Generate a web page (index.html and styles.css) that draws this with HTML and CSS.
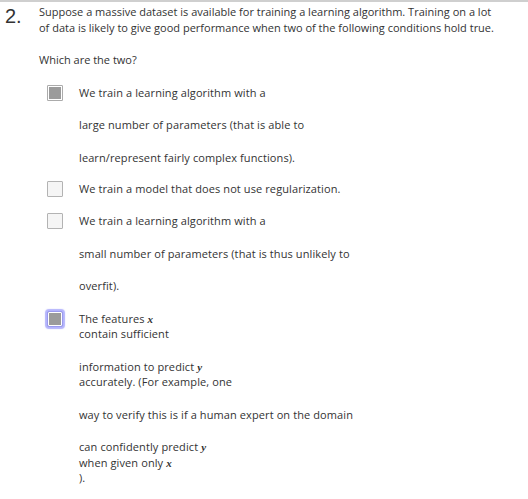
FILE: index.html
```html
<!DOCTYPE html>
<html>
<head>
<meta charset="utf-8">
<link rel="stylesheet" href="styles.css">
</head>
<body>
<div class="question">
  <div class="qnum">2.</div>
  <div class="qbody">
    <p class="nowrap">Suppose a massive dataset is available for training a learning algorithm. Training on a lot<br>of data is likely to give good performance when two of the following conditions hold true.</p>
    <p>Which are the two?</p>
    <div class="options">
      <div class="option">
        <span class="box checked"></span>
        <div class="otext">
          <p>We train a learning algorithm with a</p>
          <p>large number of parameters (that is able to</p>
          <p>learn/represent fairly complex functions).</p>
        </div>
      </div>
      <div class="option">
        <span class="box"></span>
        <div class="otext">
          <p>We train a model that does not use regularization.</p>
        </div>
      </div>
      <div class="option">
        <span class="box"></span>
        <div class="otext">
          <p>We train a learning algorithm with a</p>
          <p>small number of parameters (that is thus unlikely to</p>
          <p>overfit).</p>
        </div>
      </div>
      <div class="option last">
        <span class="box checked focused"></span>
        <div class="otext">
          <p>The features <span class="m">x</span><br>contain sufficient</p>
          <p>information to predict <span class="m">y</span><br>accurately. (For example, one</p>
          <p>way to verify this is if a human expert on the domain</p>
          <p>can confidently predict <span class="m">y</span><br>when given only <span class="m">x</span><br>).</p>
        </div>
      </div>
    </div>
  </div>
</div>
</body>
</html>
```
FILE: styles.css
```css
html, body {
  margin: 0;
  padding: 0;
  background: #fff;
}

.question {
  display: flex;
  align-items: flex-start;
  border-top: 2px solid #cfcfcf;
  padding: 2px 0 0 5px;
  color: #333;
}

.qnum {
  width: 34px;
  flex: none;
  font-family: "Liberation Sans", Arial, sans-serif;
  font-size: 20px;
  line-height: 23px;
  margin-top: 1px;
  color: #333;
}

.qbody {
  flex: 1;
  display: flex;
  flex-direction: column;
  gap: 17px;
  font-family: "Open Sans", "Noto Sans", sans-serif;
  font-size: 11px;
  line-height: 15.5px;
  color: #333;
}

.qbody p {
  margin: 0;
}

.nowrap {
  white-space: nowrap;
}

.options {
  display: flex;
  flex-direction: column;
  gap: 16px;
  padding-left: 8px;
}

.option {
  display: flex;
  align-items: flex-start;
  gap: 16px;
}

.option.last {
  margin-top: 1px;
}

.otext {
  display: flex;
  flex-direction: column;
  gap: 17px;
  letter-spacing: 0.1px;
}

.box {
  flex: none;
  box-sizing: border-box;
  width: 16px;
  height: 16px;
  margin-top: 0;
  border: 1px solid #b3b3b3;
  border-radius: 1px;
  background: #f5f5f5;
}

.box.checked {
  border-color: #ababab;
  background: #9b9b9b;
  box-shadow: inset 0 0 0 1px #fff;
}

.box.focused {
  border-color: #9a9aee;
  box-shadow: inset 0 0 0 1px #fff, 0 0 1px 2px rgba(130, 130, 250, 0.6);
  border-radius: 2px;
}

.m {
  font-family: "Liberation Serif", "Times New Roman", serif;
  font-style: italic;
  font-weight: bold;
  font-size: 11px;
  line-height: 0;
}
```
